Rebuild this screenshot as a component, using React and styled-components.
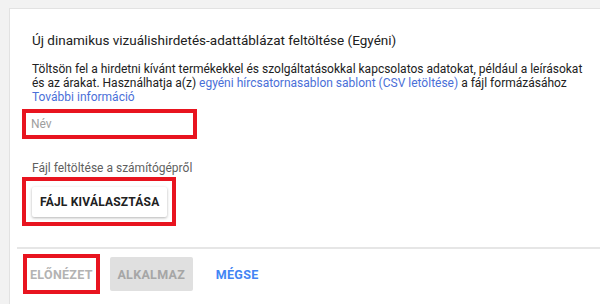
import React from "react";
import styled, { createGlobalStyle } from "styled-components";

const GlobalStyle = createGlobalStyle`
	html, body {
		margin: 0;
		padding: 0;
		background: #f2f2f2;
		font-family: Roboto, "Liberation Sans", Arial, sans-serif;
	}
`;

const App = () => {
	return (
		<>
			<GlobalStyle />
			<Page>
				<Panel>
					<Body>
						<Title>
							Új dinamikus vizuálishirdetés-adattáblázat feltöltése (Egyéni)
						</Title>
						<Description>
							Töltsön fel a hirdetni kívánt termékekkel és szolgáltatásokkal
							kapcsolatos adatokat, például a leírásokat és az árakat.
							Használhatja a(z){" "}
							<Link href="#">egyéni hírcsatornasablon sablont (CSV letöltése)</Link>{" "}
							a fájl formázásához <Link href="#">További információ</Link>
						</Description>
						<InputMark>
							<NameInput placeholder="Név" />
						</InputMark>
						<Label>Fájl feltöltése a számítógépről</Label>
						<ButtonMark>
							<RaisedButton>FÁJL KIVÁLASZTÁSA</RaisedButton>
						</ButtonMark>
					</Body>
					<Footer>
						<PreviewMark>
							<FlatButton disabled>ELŐNÉZET</FlatButton>
						</PreviewMark>
						<FilledButton disabled>ALKALMAZ</FilledButton>
						<FlatButton $primary>MÉGSE</FlatButton>
					</Footer>
				</Panel>
			</Page>
		</>
	);
};

const Page = styled.div`
	height: 304px;
	padding: 8px 0 0 9px;
	box-sizing: border-box;
	overflow: hidden;
`;

const Panel = styled.div`
	height: 100%;
	background: #fff;
	border-top: 1px solid #e2e2e2;
	border-left: 1px solid #e2e2e2;
`;

const Body = styled.div`
	display: flex;
	flex-direction: column;
	align-items: flex-start;
	padding: 21px 12px 0 22px;
`;

const Title = styled.h2`
	margin: 0;
	font-size: 13.5px;
	line-height: 20px;
	font-weight: 400;
	color: #212121;
`;

const Description = styled.p`
	margin: 12px 0 0;
	font-size: 12px;
	line-height: 14px;
	color: #212121;
`;

const Link = styled.a`
	color: #4a6fd8;
	text-decoration: none;
`;

const Mark = styled.div`
	border: 4px solid #e8141f;
	margin-left: -10px;
`;

const InputMark = styled(Mark)`
	margin-top: 5px;
	display: flex;
`;

const NameInput = styled.input`
	width: 167px;
	height: 22px;
	border: none;
	outline: none;
	padding: 0 0 0 5px;
	box-sizing: border-box;
	font: inherit;
	font-size: 12px;
	color: #212121;

	&::placeholder {
		color: #9e9e9e;
	}
`;

const Label = styled.div`
	margin-top: 22px;
	font-size: 12px;
	line-height: 14px;
	color: #5f5f5f;
`;

const ButtonMark = styled(Mark)`
	margin-top: 2px;
	padding: 6px 5px 5px 6px;
`;

const RaisedButton = styled.button`
	height: 30px;
	padding: 0 8px;
	border: none;
	border-radius: 2px;
	background: #fff;
	box-shadow: 0 1px 3px rgba(0, 0, 0, 0.3);
	font: inherit;
	font-size: 12px;
	font-weight: 700;
	letter-spacing: 0.2px;
	color: #212121;
`;

const Footer = styled.div`
	margin: 21px 0 0 7px;
	padding: 5px 0 0 6px;
	border-top: 2px solid #e6e6e6;
	display: flex;
	align-items: center;
	gap: 10px;
`;

const PreviewMark = styled(Mark)`
	margin-left: 0;
	height: 32px;
	display: flex;
	align-items: center;
`;

const FlatButton = styled.button`
	height: 34px;
	padding: 0 3px;
	border: none;
	background: transparent;
	font: inherit;
	font-size: 12.5px;
	font-weight: 700;
	letter-spacing: 0.3px;
	color: ${({ $primary }) => ($primary ? "#4285f4" : "#b3b3b3")};
	margin-left: ${({ $primary }) => ($primary ? "10px" : "0")};
`;

const FilledButton = styled.button`
	height: 34px;
	width: 83px;
	border: none;
	border-radius: 2px;
	background: #e0e0e0;
	font: inherit;
	font-size: 12.5px;
	font-weight: 700;
	letter-spacing: 0.3px;
	color: #a6a6a6;
`;

export default App;
